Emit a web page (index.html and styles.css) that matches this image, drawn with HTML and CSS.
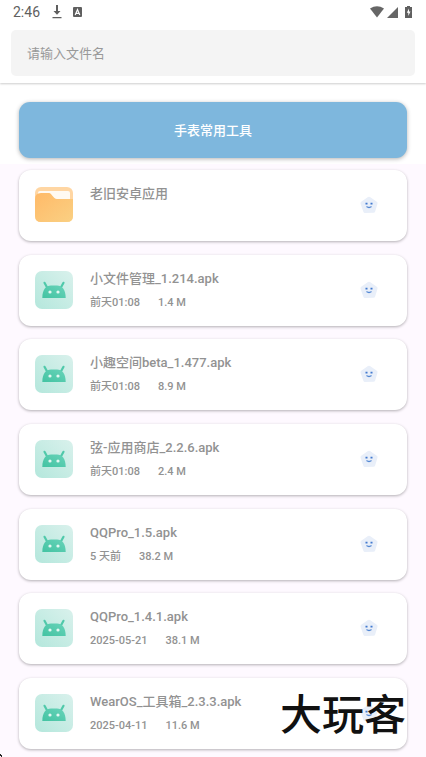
FILE: index.html
```html
<!DOCTYPE html>
<html lang="zh-CN">
<head>
<meta charset="utf-8">
<meta name="viewport" content="width=device-width, initial-scale=1">
<title>手表常用工具</title>
<link rel="stylesheet" href="styles.css">
</head>
<body>
<svg class="defs" width="0" height="0" aria-hidden="true">
  <defs>
    <linearGradient id="tile" x1="0" y1="1" x2="1" y2="0"><stop offset="0" stop-color="#b4e7dc"/><stop offset="1" stop-color="#d9f1ec"/></linearGradient>
    <linearGradient id="robot" x1="0" y1="1" x2="1" y2="0"><stop offset="0" stop-color="#43c3a2"/><stop offset="1" stop-color="#68d3b9"/></linearGradient>
    <linearGradient id="folder" x1="0" y1="0" x2="1" y2="1"><stop offset="0" stop-color="#ffba68"/><stop offset="1" stop-color="#fad083"/></linearGradient>
    <symbol id="apk" viewBox="0 0 38 38">
      <rect width="38" height="38" rx="7" fill="url(#tile)"/>
      <path d="M9.500 11.800l3 5.500M28.500 11.800l-3 5.500" stroke="#50c9aa" stroke-width="2.200" stroke-linecap="round"/>
      <path d="M7.300 27C7.300 18.500 11 14.500 16 14.500h6C27 14.500 30.700 18.500 30.700 27z" fill="url(#robot)"/>
      <circle cx="15" cy="21" r="1.600" fill="#e3f7f2"/><circle cx="23" cy="21" r="1.600" fill="#e3f7f2"/>
    </symbol>
    <symbol id="star" viewBox="0 0 18 18">
      <path d="M9 2.500L15.800 7.200L13.500 15L5 15.300L2.200 7.200z" fill="#e9eff9" stroke="#e9eff9" stroke-width="3.500" stroke-linejoin="round"/>
      <path d="M5.500 7.700h2M10.500 7.700h2" fill="none" stroke="#4179cf" stroke-width="1.800"/>
      <path d="M6.500 10.500q2.500 2 5 0" fill="none" stroke="#5488d4" stroke-width="1.300"/>
    </symbol>
  </defs>
</svg>

<div class="screen">
  <header class="top">
    <div class="status">
      <span class="clock">2:46</span>
      <svg width="10" height="14" viewBox="0 0 10 14" aria-hidden="true"><path d="M4 0h2v6h2.500L5 9.800 1.500 6H4zM.5 12h9v1.300h-9z" fill="#5f5f5f"/></svg>
      <svg class="badge" width="9" height="10" viewBox="0 0 9 10" aria-hidden="true"><rect width="9" height="10" rx="1" fill="#5f5f5f"/><path d="M2.200 8L4.500 2.500 6.800 8M3 6.300h3" fill="none" stroke="#fff" stroke-width="1.200"/></svg>
      <svg class="wifi" width="14" height="12" viewBox="0 0 14 12" aria-hidden="true"><path d="M0 2.500Q7-2.200 14 2.500L7 11.500z" fill="#666"/></svg>
      <svg width="11" height="11" viewBox="0 0 11 11" aria-hidden="true"><path d="M11 0v11H0z" fill="#666"/></svg>
      <svg class="battery" width="7" height="12" viewBox="0 0 7 12" aria-hidden="true"><path d="M2 0h3v1h2v11H0V1h2z" fill="#606060"/><path d="M4 2.500L1.800 6.700h1.500V10L5.500 5.500H4z" fill="#fff"/></svg>
    </div>
    <input class="search" type="text" placeholder="请输入文件名" aria-label="请输入文件名">
  </header>

  <div class="banner"><button class="category" type="button">手表常用工具</button></div>

  <main class="files">
    <article class="card">
      <svg class="icon" viewBox="0 0 38 38" aria-hidden="true"><rect y="1" width="38" height="35" rx="6" fill="#ffd6a3"/><rect x="3" y="5" width="32" height="16" rx="2" fill="#fffaf2"/><path d="M0 13Q0 7 6 7h8c3 0 4 6 8 6h16v17q0 6-6 6H6q-6 0-6-6z" fill="url(#folder)"/></svg>
      <div class="text"><h2>老旧安卓应用</h2></div>
      <svg class="star" aria-hidden="true"><use href="#star"/></svg>
    </article>
    <article class="card">
      <svg class="icon" aria-hidden="true"><use href="#apk"/></svg>
      <div class="text"><h2>小文件管理_1.214.apk</h2><p><span>前天01:08</span><span>1.4 M</span></p></div>
      <svg class="star" aria-hidden="true"><use href="#star"/></svg>
    </article>
    <article class="card">
      <svg class="icon" aria-hidden="true"><use href="#apk"/></svg>
      <div class="text"><h2>小趣空间beta_1.477.apk</h2><p><span>前天01:08</span><span>8.9 M</span></p></div>
      <svg class="star" aria-hidden="true"><use href="#star"/></svg>
    </article>
    <article class="card">
      <svg class="icon" aria-hidden="true"><use href="#apk"/></svg>
      <div class="text"><h2>弦-应用商店_2.2.6.apk</h2><p><span>前天01:08</span><span>2.4 M</span></p></div>
      <svg class="star" aria-hidden="true"><use href="#star"/></svg>
    </article>
    <article class="card">
      <svg class="icon" aria-hidden="true"><use href="#apk"/></svg>
      <div class="text"><h2>QQPro_1.5.apk</h2><p><span>5 天前</span><span>38.2 M</span></p></div>
      <svg class="star" aria-hidden="true"><use href="#star"/></svg>
    </article>
    <article class="card">
      <svg class="icon" aria-hidden="true"><use href="#apk"/></svg>
      <div class="text"><h2>QQPro_1.4.1.apk</h2><p><span>2025-05-21</span><span>38.1 M</span></p></div>
      <svg class="star" aria-hidden="true"><use href="#star"/></svg>
    </article>
    <article class="card">
      <svg class="icon" aria-hidden="true"><use href="#apk"/></svg>
      <div class="text"><h2>WearOS_工具箱_2.3.3.apk</h2><p><span>2025-04-11</span><span>11.6 M</span></p></div>
      <svg class="star" aria-hidden="true"><use href="#star"/></svg>
    </article>
  </main>
  <div class="watermark">大玩客</div>
  <svg class="speck" width="3" height="4" viewBox="0 0 3 4" aria-hidden="true"><path d="M0 1h1v1h1v2H1V3H0z" fill="#222"/></svg>
</div>
</body>
</html>
```
FILE: styles.css
```css
* { box-sizing: border-box; }

body {
  margin: 0;
  background: #fef9ff;
  color: #929292;
  font-family: Roboto, "Noto Sans CJK SC", sans-serif;
}

.defs { position: absolute; }

.screen {
  position: relative;
  display: flex;
  flex-direction: column;
  min-height: 100vh;
}

.top {
  padding: 0 11px 7px;
  background: #fff;
  box-shadow: 0 1px 2px rgba(0, 0, 0, 0.2);
  z-index: 1;
}

.status {
  display: flex;
  align-items: center;
  height: 24px;
  margin-bottom: 6px;
  padding: 0 3px 0 2px;
}

.clock {
  margin-right: 12px;
  font-size: 14px;
  line-height: 24px;
  color: #5f5f5f;
}

.badge { margin-left: 11px; }
.wifi { margin-left: auto; margin-right: 3px; }
.battery { margin-left: 7px; }

.search {
  display: block;
  width: 100%;
  height: 46px;
  padding: 0 16px;
  border: 0;
  border-radius: 5px;
  background: #f4f4f4;
  color: #666;
  font: 13px Roboto, "Noto Sans CJK SC", sans-serif;
}

.search::placeholder { color: #999; opacity: 1; }

.banner {
  padding: 19px 19px 6px;
  background: #fff;
}

.category {
  display: block;
  width: 100%;
  height: 56px;
  padding: 0 0 2px;
  border: 0;
  border-radius: 11px;
  background: #7eb7dd;
  box-shadow: 0 1px 4px rgba(0, 0, 0, 0.3);
  color: #fff;
  font: 500 13px Roboto, "Noto Sans CJK SC", sans-serif;
}

.files {
  flex: 1;
  display: flex;
  flex-direction: column;
  justify-content: space-between;
  gap: 12px;
  padding: 6px 19px 8px;
}

.card {
  display: flex;
  align-items: flex-start;
  min-height: 71px;
  padding: 0 29px 0 16px;
  border-radius: 12px;
  background: #fff;
  box-shadow: 0 1px 3px rgba(0, 0, 0, 0.3);
}

.icon {
  flex: none;
  width: 38px;
  height: 38px;
  margin-top: 16px;
}

.text {
  flex: 1;
  padding: 14px 0 0 17px;
}

h2 {
  margin: 0 0 6px;
  font-size: 13px;
  line-height: 20px;
  font-weight: 500;
}

p {
  display: flex;
  gap: 18px;
  margin: 0;
  font-size: 11px;
  line-height: 16px;
  font-weight: 500;
}

.star {
  flex: none;
  width: 18px;
  height: 18px;
  margin-top: 26px;
}

.watermark {
  position: absolute;
  right: 20px;
  bottom: 16px;
  color: #111;
  font-size: 42px;
  line-height: 50px;
  font-weight: 500;
}

.speck {
  position: absolute;
  left: 0;
  bottom: 0;
}
```
